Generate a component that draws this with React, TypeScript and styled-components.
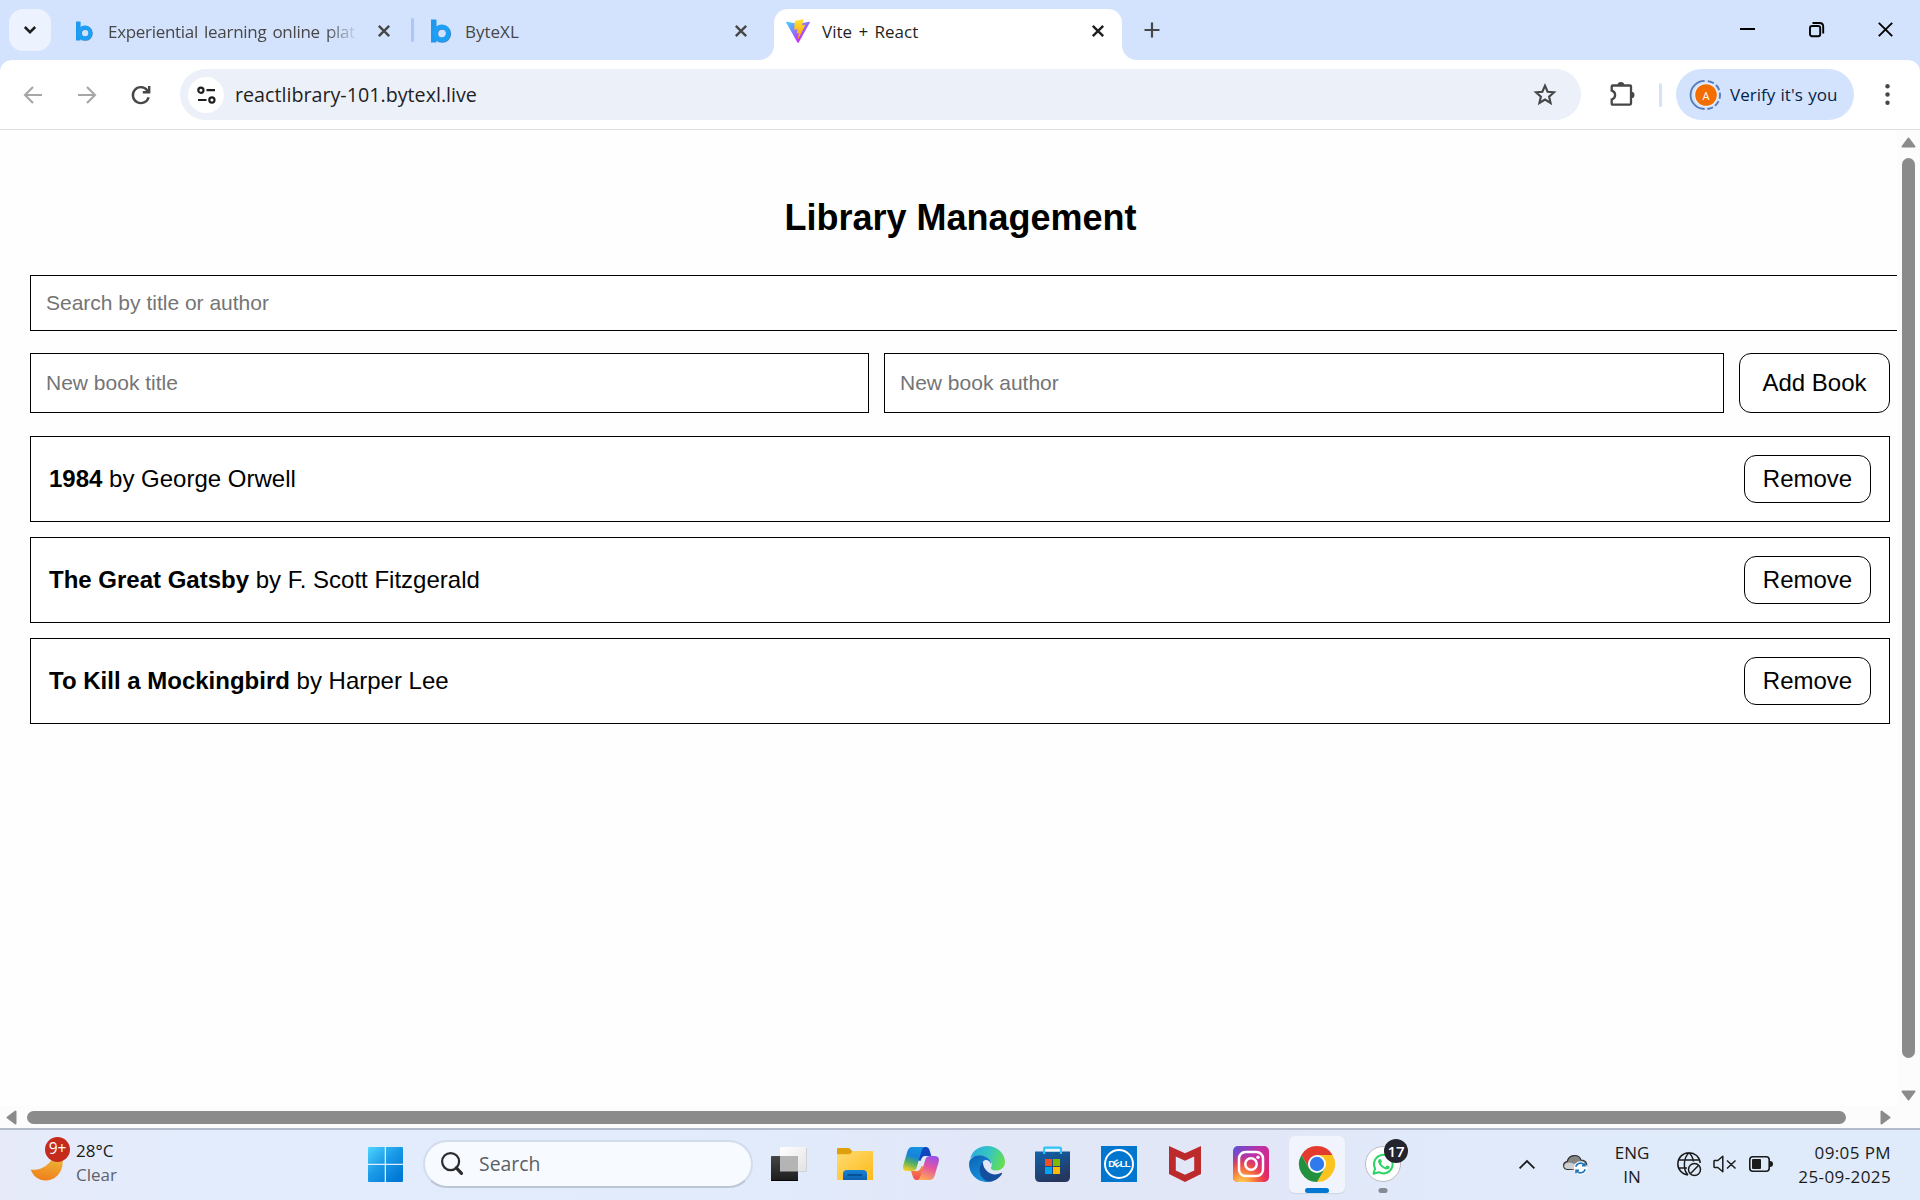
import React, { useState } from "react";
import styled, { createGlobalStyle, css } from "styled-components";

const Global = createGlobalStyle`
  *, *::before, *::after { box-sizing: border-box; }
  body { margin: 0; overflow: hidden; background: #fff; }
  button, input { font: inherit; margin: 0; }
  svg { display: block; flex: none; overflow: visible; }
`;

const uiFont = `"Open Sans", "Noto Sans", sans-serif`;
const pageFont = `"Liberation Sans", Arial, sans-serif`;

const Screen = styled.div`
  width: 1920px;
  height: 1200px;
  display: flex;
  flex-direction: column;
  background: #d3e3fd;
  overflow: hidden;
  font-family: ${uiFont};
`;

const bareButton = css`
  border: 0;
  padding: 0;
  background: none;
  display: flex;
  align-items: center;
  justify-content: center;
  flex: none;
`;

/* ---------- Tab strip ---------- */

const TabStrip = styled.header`
  display: flex;
  height: 60px;
  padding: 9px 0 0 9px;
  flex: none;
`;

const TabSearch = styled.button`
  ${bareButton}
  width: 42px;
  height: 42px;
  border-radius: 14px;
  background: #ecf2fe;
  margin-right: 9px;
`;

const Tab = styled.div<{ $width: number; $right: number; $active?: boolean }>`
  position: relative;
  display: flex;
  align-items: center;
  width: ${(p) => p.$width}px;
  height: 51px;
  padding: 0 ${(p) => p.$right}px 17px 12px;
  flex: none;
  color: ${(p) => (p.$active ? "#1f1f1f" : "#474747")};
  ${(p) =>
    p.$active &&
    css`
      background: #fff;
      border-radius: 14px 14px 0 0;
      &::before,
      &::after {
        content: "";
        position: absolute;
        bottom: 0;
        width: 15px;
        height: 15px;
      }
      &::before {
        left: -15px;
        background: radial-gradient(circle at 0 0, transparent 14.5px, #fff 15.5px);
      }
      &::after {
        right: -15px;
        background: radial-gradient(circle at 100% 0, transparent 14.5px, #fff 15.5px);
      }
    `}
`;

const Favicon = styled.span`
  display: flex;
  justify-content: center;
  align-items: center;
  width: 24px;
  height: 42px;
  flex: none;
  margin-top: 9px;
`;

const TabTitle = styled.span<{ $fade?: boolean }>`
  flex: 1;
  min-width: 0;
  margin: 11px 20px 0 12px;
  font-size: 17px;
  line-height: 24px;
  white-space: nowrap;
  word-spacing: 2px;
  ${(p) =>
    p.$fade &&
    css`
      letter-spacing: -0.3px;
      mask-image: linear-gradient(to right, #000 calc(100% - 32px), transparent);
    `}
`;

const TabClose = styled.button`
  ${bareButton}
  color: inherit;
  width: 12px;
  height: 12px;
  margin-top: 9px;
`;

const TabDivider = styled.span`
  width: 3px;
  height: 24px;
  border-radius: 2px;
  background: #a8c7fa;
  margin: 9px 3px 0 0;
  flex: none;
`;

const NewTab = styled.button`
  ${bareButton}
  width: 60px;
  height: 42px;
`;

const WindowControls = styled.div`
  margin-left: auto;
  display: flex;
  height: 42px;
  margin-top: -1px;
`;

const WindowButton = styled.button`
  ${bareButton}
  width: 69px;
`;

/* ---------- Toolbar ---------- */

const Toolbar = styled.nav`
  display: flex;
  align-items: center;
  height: 70px;
  flex: none;
  padding: 0 18px 0 15px;
  background: #fff;
  border-bottom: 1px solid #dedfe1;
  border-radius: 12px 12px 0 0;
`;

const ToolButton = styled.button<{ $after?: number }>`
  ${bareButton}
  width: 36px;
  height: 36px;
  margin-right: ${(p) => p.$after ?? 18}px;
`;

const AddressBar = styled.div`
  display: flex;
  align-items: center;
  width: 1401px;
  height: 51px;
  padding: 0 24px 0 8px;
  border-radius: 26px;
  background: #ecf0f9;
  margin-right: 23px;
  flex: none;
`;

const SiteInfo = styled.button`
  ${bareButton}
  width: 36px;
  height: 36px;
  border-radius: 50%;
  background: #fff;
`;

const Url = styled.span`
  flex: 1;
  margin-left: 11px;
  font-size: 19.7px;
  line-height: 26px;
  color: #1f1f1f;
`;

const ToolDivider = styled.span`
  flex: none;
  width: 3px;
  height: 24px;
  border-radius: 2px;
  background: #d3e3fd;
  margin-right: 14px;
`;

const ProfileChip = styled.button`
  ${bareButton}
  justify-content: flex-start;
  width: 178px;
  height: 51px;
  padding-left: 15px;
  border-radius: 26px;
  background: #d3e3fd;
  color: #041e49;
  font-size: 17px;
  line-height: 24px;
  gap: 9px;
  word-spacing: 1px;
  white-space: nowrap;
`;

const Avatar = styled.span`
  position: relative;
  display: flex;
  width: 30px;
  height: 30px;
  align-items: center;
  justify-content: center;
`;

const AvatarLetter = styled.span`
  position: absolute;
  inset: 0;
  text-align: center;
  font-size: 11px;
  line-height: 31px;
  color: #fff;
`;

const MenuButton = styled.button`
  ${bareButton}
  width: 30px;
  height: 36px;
  margin-left: 18px;
`;

/* ---------- Page viewport ---------- */

const Viewport = styled.div`
  display: grid;
  grid-template-columns: 1897px 23px;
  grid-template-rows: 976px 22px;
  height: 998px;
  flex: none;
  background: #fcfcfc;
`;

const Page = styled.main`
  padding: 60px 7px 0 30px;
  background: #fefefe;
  overflow: hidden;
  font-family: ${pageFont};
  font-size: 24px;
  color: #000;
`;

const Heading = styled.h1`
  margin: 5px 0 35px 1px;
  text-align: center;
  font-size: 36px;
  line-height: 45px;
  font-weight: 700;
`;

const Field = styled.input`
  border: 1px solid #000;
  border-radius: 0;
  padding: 0 15px;
  font-size: 21px;
  background: #fff;
  color: #000;
  outline: none;
  min-width: 0;
  &::placeholder {
    color: #757575;
    opacity: 1;
  }
`;

const SearchField = styled(Field)`
  display: block;
  width: 1892px;
  height: 56px;
  margin-bottom: 22px;
`;

const AddRow = styled.form`
  display: grid;
  grid-template-columns: 839px 840px 151px;
  gap: 15px;
  height: 60px;
  margin-bottom: 23px;
`;

const PageButton = styled.button<{ $w: number; $h: number }>`
  ${bareButton}
  width: ${(p) => p.$w}px;
  height: ${(p) => p.$h}px;
  border: 1px solid #000;
  border-radius: 12px;
  background: #fff;
  color: #000;
  font-size: 24px;
`;

const BookList = styled.ul`
  list-style: none;
  margin: 0;
  padding: 0;
  display: flex;
  flex-direction: column;
  gap: 15px;
`;

const BookRow = styled.li`
  display: flex;
  align-items: center;
  justify-content: space-between;
  height: 86px;
  padding: 0 18px;
  border: 1px solid #000;
  background: #fff;
`;

/* ---------- Scrollbars ---------- */

const VTrack = styled.div`
  display: flex;
  flex-direction: column;
  align-items: center;
  padding: 7px 0 5px 0;
  background: #fcfcfc;
`;

const VThumb = styled.div`
  width: 13px;
  height: 900px;
  margin: 10px 0 auto 0;
  border-radius: 7px;
  background: #8b8b8b;
`;

const HTrack = styled.div`
  display: flex;
  align-items: center;
  padding: 1px 6px 0 6px;
  background: #fcfcfc;
`;

const HThumb = styled.div`
  width: 1819px;
  height: 13px;
  margin: 0 auto 0 10px;
  border-radius: 7px;
  background: #8b8b8b;
`;

/* ---------- Taskbar ---------- */

const Taskbar = styled.footer`
  display: flex;
  align-items: flex-start;
  height: 72px;
  flex: none;
  border-top: 2px solid #b3bbca;
  background: linear-gradient(90deg, #e6eaf9 0, #e3ecfc 180px, #e1ebfb 760px, #e2e7f8 1000px, #e2e7f8 1250px, #e0eafa 1450px, #dfebfa 1920px);
  color: #1b1b1b;
`;

const Weather = styled.div`
  display: flex;
  width: 352px;
  padding: 7px 0 0 30px;
  gap: 10px;
`;

const MoonBox = styled.span`
  position: relative;
  width: 36px;
  height: 46px;
  padding-top: 21px;
  flex: none;
`;

const AlertBadge = styled.span`
  position: absolute;
  left: 15px;
  top: 0;
  width: 25px;
  height: 25px;
  border-radius: 50%;
  background: #c42b1c;
  color: #fff;
  font-size: 15.5px;
  line-height: 23px;
  text-align: center;
`;

const TwoLines = styled.div<{ $align?: string; $w?: number; $track?: number }>`
  display: flex;
  flex-direction: column;
  margin-top: 2px;
  font-size: 17px;
  line-height: 24px;
  letter-spacing: ${(p) => p.$track ?? 0}px;
  text-align: ${(p) => p.$align ?? "left"};
  ${(p) => p.$w && `width: ${p.$w}px;`}
  flex: none;
`;

const WeatherState = styled.span`
  color: #5d6169;
`;

const StartButton = styled.button`
  ${bareButton}
  width: 66px;
  height: 69px;
`;

const TaskSearch = styled.div`
  display: flex;
  align-items: center;
  width: 330px;
  height: 48px;
  margin: 10px 3px 0 5px;
  padding: 0 0 1px 16px;
  gap: 16px;
  border: 2px solid #d3dcec;
  border-bottom-color: #bcc5d5;
  border-radius: 24px;
  background: #f7faff;
  color: #5c5f64;
  font-size: 19.4px;
  flex: none;
`;

const TaskApps = styled.div`
  display: flex;
  height: 70px;
`;

const TaskApp = styled.button<{ $active?: boolean }>`
  ${bareButton}
  position: relative;
  width: 56px;
  height: 57px;
  margin: 6px 5px 0;
  border-radius: 6px;
  padding-bottom: 1px;
  ${(p) =>
    p.$active &&
    css`
      background: #f1f4fd;
      box-shadow: 0 1px 1px #cdd3e2, 0 0 0 1px #e3e8f5;
    `}
`;

const Indicator = styled.span<{ $active?: boolean }>`
  position: absolute;
  bottom: 0;
  left: 50%;
  transform: translateX(-50%);
  width: ${(p) => (p.$active ? 24 : 9)}px;
  height: 5px;
  border-radius: 3px;
  background: ${(p) => (p.$active ? "#0078d4" : "#868a95")};
`;

const CountBadge = styled.span`
  position: absolute;
  left: 29px;
  top: 3px;
  width: 24px;
  height: 24px;
  border-radius: 50%;
  background: #23242d;
  color: #fff;
  font: 600 15px/24px ${uiFont};
  text-align: center;
`;

const Tray = styled.div`
  display: flex;
  align-items: center;
  margin-left: auto;
  height: 68px;
  padding-right: 29px;
`;

const TrayIcon = styled.span<{ $ml: number }>`
  display: flex;
  margin-left: ${(p) => p.$ml}px;
`;

/* ---------- Drawings ---------- */

const Close = ({ size = 12, w = 2.4 }: { size?: number; w?: number }) => (
  <svg width={size} height={size} viewBox={`0 0 ${size} ${size}`} stroke="currentColor" strokeWidth={w} fill="none">
    <path d={`M.8 .8L${size - 0.8} ${size - 0.8}M${size - 0.8} .8L.8 ${size - 0.8}`} />
  </svg>
);

const ByteLogo = ({ size }: { size: number }) => (
  <svg width={(size * 20) / 24} height={size} viewBox="0 0 20 24">
    <circle cx="11.2" cy="14.8" r="6.5" fill="none" stroke="#4d80b3" strokeWidth="5" />
    <path d="M0 .5H4.500Q5.500 .5 5.500 1.500V23.500H0Z" fill="#1f98ee" />
    <circle cx="10.7" cy="14.3" r="6.5" fill="none" stroke="#1c9ff6" strokeWidth="4.8" />
  </svg>
);

const ViteLogo = () => (
  <svg width="24" height="24" viewBox="0 0 256 257">
    <defs>
      <linearGradient id="vg1" x1="-.8%" x2="57.6%" y1="7.7%" y2="78.4%">
        <stop offset="0" stopColor="#41D1FF" />
        <stop offset="1" stopColor="#BD34FE" />
      </linearGradient>
      <linearGradient id="vg2" x1="43.4%" x2="50.3%" y1="2.2%" y2="89%">
        <stop offset="0" stopColor="#FFEA83" />
        <stop offset=".083" stopColor="#FFDD35" />
        <stop offset="1" stopColor="#FFA800" />
      </linearGradient>
    </defs>
    <path fill="url(#vg1)" d="M255.153 37.938L134.897 252.976c-2.483 4.44-8.862 4.466-11.382.048L.875 37.958c-2.746-4.814 1.371-10.646 6.827-9.67l120.385 21.517a6.537 6.537 0 0 0 2.322-.004l117.867-21.483c5.438-.991 9.574 4.796 6.877 9.62Z" />
    <path fill="url(#vg2)" d="M185.432.063L96.44 17.501a3.268 3.268 0 0 0-2.634 3.014l-5.474 92.456a3.268 3.268 0 0 0 3.997 3.378l24.777-5.718c2.318-.535 4.413 1.507 3.936 3.838l-7.361 36.047c-.495 2.426 1.782 4.5 4.151 3.78l15.304-4.649c2.372-.72 4.652 1.36 4.15 3.788l-11.698 56.621c-.732 3.542 3.979 5.473 5.943 2.437l1.313-2.028l72.516-144.72c1.215-2.423-.88-5.186-3.54-4.672l-25.505 4.922c-2.396.462-4.435-1.77-3.759-4.114l16.646-57.705c.677-2.35-1.37-4.583-3.769-4.113Z" />
  </svg>
);

const Arrow = ({ flip }: { flip?: boolean }) => (
  <svg width="18" height="18" viewBox="0 0 18 18" fill="none" stroke="#a6a6a6" strokeWidth="2.1">
    <path d={flip ? "M0 9H16.5M9 .9L17 9L9 17.1" : "M18 9H1.5M9 .9L1 9L9 17.1"} />
  </svg>
);

const Reload = () => (
  <svg width="20" height="20" viewBox="0 0 20 20" fill="none" stroke="#474747" strokeWidth="2.4">
    <path d="M17.6 12.2A8 8 0 1 1 16.2 5.2L18 7" />
    <path d="M18.2 1V7.2H11.8" />
  </svg>
);

const Tune = () => (
  <svg width="19" height="18" viewBox="0 0 19 18" fill="none" stroke="#1f1f1f" strokeWidth="2.2">
    <circle cx="3.9" cy="4.2" r="2.6" />
    <path d="M9.5 4.2H18M1 14H9.5" />
    <circle cx="14.9" cy="14" r="2.6" />
  </svg>
);

const Star = () => (
  <svg width="24" height="24" viewBox="0 .7 24 24" fill="none" stroke="#474747" strokeWidth="2.1">
    <path d="M12 3.3L14.6 9.4L21 10L16.1 14.3L17.6 20.7L12 17.3L6.4 20.7L7.9 14.3L3 10L9.4 9.4Z" />
  </svg>
);

const Puzzle = () => (
  <svg width="24" height="25" viewBox="0 .7 24 25">
    <path d="M1.7 5.2Q1.7 4.2 2.7 4.2H20Q21 4.2 21 5.2V22.3Q21 23.3 20 23.3H2.7Q1.7 23.3 1.7 22.3V18.2A4.6 4.6 0 0 0 1.7 9.3Z" fill="none" stroke="#474747" strokeWidth="2.3" />
    <path d="M7.6 4A3.3 3.3 0 0 1 14.2 4ZM21.2 10.4A3.3 3.3 0 0 1 21.2 17Z" fill="#474747" />
  </svg>
);

const AvatarDisc = () => (
  <svg width="30" height="30" viewBox="0 0 30 30">
    <circle cx="15" cy="15" r="12" fill="#e9effb" />
    <circle cx="15" cy="15" r="10.8" fill="#f46d00" />
    <g fill="none" stroke="#5279b4" strokeWidth="1.8">
      <path d="M13.6 .9A14 14 0 0 0 13.6 29" />
      <path d="M16.8 1.1A14 14 0 0 1 22.8 3.3M25 5A14 14 0 0 1 28.2 10.1M28.9 12.7A14 14 0 0 1 28.5 18.7M27.6 21.2A14 14 0 0 1 24 25.8M22 27.2A14 14 0 0 1 16.4 29" />
    </g>
  </svg>
);

const Triangle = ({ d, w, h }: { d: string; w: number; h: number }) => (
  <svg width={w} height={h} viewBox={`0 0 ${w} ${h}`}>
    <path d={d} fill="#8b8b8b" stroke="#8b8b8b" strokeWidth="2" strokeLinejoin="round" />
  </svg>
);

const Moon = () => (
  <svg width="34" height="24" viewBox="0 0 34 24">
    <defs>
      <linearGradient id="moon" x1=".6" y1="0" x2=".4" y2="1">
        <stop offset="0" stopColor="#ecb73a" />
        <stop offset="1" stopColor="#ef7f1a" />
      </linearGradient>
    </defs>
    <path d="M.8 11.5C11 13 19 7.500 24 -2L32 -1C35 10 28 22 16.500 22.500C9 22.800 3 18.500 .8 11.500Z" fill="url(#moon)" />
  </svg>
);

const WindowsLogo = () => (
  <svg width="35" height="35" viewBox="0 0 35 35">
    <defs>
      <linearGradient id="win" gradientUnits="userSpaceOnUse" x1="0" y1="0" x2="30" y2="32">
        <stop offset="0" stopColor="#50d4ff" />
        <stop offset=".5" stopColor="#1b9be8" />
        <stop offset="1" stopColor="#0078d4" />
      </linearGradient>
    </defs>
    <path d="M1 0H16.700V16.700H0V1Q0 0 1 0ZM18 0H34Q35 0 35 1V16.700H18ZM0 18H16.700V35H1Q0 35 0 34ZM18 18H35V34Q35 35 34 35H18Z" fill="url(#win)" />
  </svg>
);

const Magnifier = () => (
  <svg width="22" height="23" viewBox="0 0 22 23" fill="none" stroke="#2b2b2b">
    <circle cx="9.600" cy="9.600" r="8.500" strokeWidth="2.200" />
    <path d="M15.300 15.800L20.500 21.300" strokeWidth="3.200" strokeLinecap="round" />
  </svg>
);

const TaskView = () => (
  <svg width="36" height="36" viewBox="0 0 36 36">
    <defs>
      <linearGradient id="tvd" x2="0" y2="1">
        <stop offset="0" stopColor="#454545" />
        <stop offset="1" stopColor="#1c1c1c" />
      </linearGradient>
      <linearGradient id="tvl" x2="1" y2="1">
        <stop offset="0" stopColor="#fff" />
        <stop offset="1" stopColor="#e2e2e2" />
      </linearGradient>
    </defs>
    <rect x="9" y="1" width="27" height="25" rx="1" fill="url(#tvl)" />
    <path d="M9.500 25.500H35.500V2" fill="none" stroke="#cfd1d6" />
    <rect x="0" y="10" width="27" height="25" rx="1" fill="url(#tvd)" />
    <path d="M0 34.500H27" stroke="#050505" />
    <rect x="9" y="10" width="18" height="15.500" fill="#b4b4b4" />
  </svg>
);

const Folder = () => (
  <svg width="36" height="36" viewBox="0 0 36 36">
    <defs>
      <linearGradient id="fo" x2="1" y2="1">
        <stop offset="0" stopColor="#ffdb73" />
        <stop offset="1" stopColor="#fdbb17" />
      </linearGradient>
      <linearGradient id="fb" x2="0" y2="1">
        <stop offset="0" stopColor="#1683d6" />
        <stop offset="1" stopColor="#0c62b0" />
      </linearGradient>
    </defs>
    <path d="M0 3Q0 2 1 2H11Q12.500 2 13.300 3L15.500 5.500V12H0Z" fill="#dfa00b" />
    <path d="M0 8.200H11.500Q13 8.200 14 7.200L15.800 5H35Q36 5 36 6V34H0Z" fill="url(#fo)" />
    <path d="M6 34V28Q6 24 10 24H26Q30 24 30 28V34Z" fill="url(#fb)" />
    <path d="M10.500 29H25" stroke="#084f94" strokeWidth="1.800" />
  </svg>
);

const Copilot = () => (
  <svg width="36" height="36" viewBox="0 0 36 36">
    <defs>
      <linearGradient id="ca" x1=".6" y1="0" x2=".3" y2="1">
        <stop offset="0" stopColor="#1594e0" />
        <stop offset=".38" stopColor="#1583dc" />
        <stop offset=".66" stopColor="#4fae63" />
        <stop offset="1" stopColor="#f2ce25" />
      </linearGradient>
      <linearGradient id="cb" x1=".6" y1="0" x2=".3" y2="1">
        <stop offset="0" stopColor="#9c52e6" />
        <stop offset=".45" stopColor="#e5559f" />
        <stop offset="1" stopColor="#fda955" />
      </linearGradient>
      <linearGradient id="cc" x2="1" y2="1">
        <stop offset="0" stopColor="#0b49c4" />
        <stop offset="1" stopColor="#1840bd" />
      </linearGradient>
      <linearGradient id="cd" x2="0" y2="1">
        <stop offset="0" stopColor="#f7903c" />
        <stop offset="1" stopColor="#ef4c58" />
      </linearGradient>
    </defs>
    <path d="M18 1H23Q25.500 1 26.500 4L28.300 10H22Q19 10 17.500 15L14 14Z" fill="url(#cc)" />
    <path d="M18 34H13.500Q11 34 10 31L8 25H14Q17 25 18.500 20L22 21Z" fill="url(#cd)" />
    <path d="M9 1H22Q19.500 1.500 18.500 5L13.500 22Q12.500 25 9 25H4Q-1 25 .3 19L4.500 5Q6 1 9 1Z" fill="url(#ca)" />
    <path d="M27 34H14Q16.500 33.500 17.500 30L22.500 13Q23.500 10 27 10H32Q37 10 35.700 16L31.500 30Q30 34 27 34Z" fill="url(#cb)" />
  </svg>
);

const Edge = () => (
  <svg width="36" height="36" viewBox="0 0 36 36">
    <defs>
      <linearGradient id="ea" x1="0" x2="1" y1=".3" y2=".6">
        <stop offset="0" stopColor="#2aaede" />
        <stop offset=".5" stopColor="#35c6c0" />
        <stop offset="1" stopColor="#66df4d" />
      </linearGradient>
      <linearGradient id="eb" x2=".5" y2="1">
        <stop offset="0" stopColor="#0c62b4" />
        <stop offset="1" stopColor="#1790dc" />
      </linearGradient>
    </defs>
    <path d="M1 13C3 5 10 0 18 0C28 0 36 7 36 16C36 21 32 24.500 27 24.500C24 24.500 21.500 23.500 22 21.500C24 19 22 13 17 11C11 8.500 4 9.500 1 13Z" fill="url(#ea)" />
    <path d="M.3 15.500C3 9.500 10 8 15.500 10.300C20 12 22.500 15 22 18C21 14.500 17 12.500 14.500 15C11 20 13.500 30 21 34C22 34.800 21.500 35.500 19 36C8 36.500 -1.500 27 .3 15.500Z" fill="url(#eb)" />
    <path d="M13.800 16C7 23 12 35 21 35.800C26 35 31 31.500 33 27.700C33.300 26.700 32.700 26.600 32 27C24 31 14.500 26 13.800 16Z" fill="#134f9c" />
  </svg>
);

const Store = () => (
  <svg width="36" height="36" viewBox="0 0 36 36">
    <defs>
      <linearGradient id="st" x2=".4" y2="1">
        <stop offset="0" stopColor="#1064ae" />
        <stop offset="1" stopColor="#25375f" />
      </linearGradient>
    </defs>
    <path d="M0 5.500H35V31Q35 36 30 36H5Q0 36 0 31Z" fill="url(#st)" />
    <path d="M9.200 8V2.500Q9.200 1.600 10.100 1.600H25Q25.900 1.600 25.900 2.500V8" fill="none" stroke="#2fc4f2" strokeWidth="2.200" />
    <path d="M10.300 3.500H24.800V5.500H10.300Z" fill="#f3f8fd" />
    <path d="M10 13H17V20H10Z" fill="#f25022" />
    <path d="M18 13H25V20H18Z" fill="#7fba00" />
    <path d="M10 21H17V28H10Z" fill="#00a4ef" />
    <path d="M18 21H25V28H18Z" fill="#ffb900" />
  </svg>
);

const DellTile = styled.span`
  display: flex;
  align-items: center;
  justify-content: center;
  width: 36px;
  height: 36px;
  background: #0076ce;
`;

const DellRing = styled.span`
  display: flex;
  align-items: center;
  justify-content: center;
  width: 30px;
  height: 30px;
  border: 2px solid #fff;
  border-radius: 50%;
  color: #fff;
  font: 700 9.500px/10px ${pageFont};
  letter-spacing: -0.800px;
`;

const DellTilt = styled.span`
  display: inline-block;
  transform: rotate(-35deg);
`;

const McAfee = () => (
  <svg width="36" height="36" viewBox="0 0 36 36">
    <path d="M2 0L18 7.300L34 0V28L18 36L2 28Z M8.800 10.500V24.500L18 28.700L27.200 24.500V10.500L18 14.800Z" fill="#bd2a2c" fillRule="evenodd" />
  </svg>
);

const Instagram = () => (
  <svg width="36" height="36" viewBox="0 0 36 36">
    <defs>
      <linearGradient id="ig" x1="0" y1="0" x2="1" y2=".8">
        <stop offset="0" stopColor="#5a53d8" />
        <stop offset=".5" stopColor="#c32fa4" />
        <stop offset="1" stopColor="#e0246c" />
      </linearGradient>
      <radialGradient id="ih" cx=".25" cy="1.050" r=".85">
        <stop offset="0" stopColor="#ffd95c" />
        <stop offset=".3" stopColor="#fd9a3c" />
        <stop offset=".65" stopColor="#f2503f" stopOpacity=".85" />
        <stop offset="1" stopColor="#e0246c" stopOpacity="0" />
      </radialGradient>
    </defs>
    <rect width="36" height="36" rx="5" fill="url(#ig)" />
    <rect width="36" height="36" rx="5" fill="url(#ih)" />
    <rect x="6" y="6" width="24" height="24" rx="6.500" fill="none" stroke="#fff" strokeWidth="2.500" />
    <circle cx="18" cy="18" r="5.700" fill="none" stroke="#fff" strokeWidth="2.500" />
    <circle cx="25" cy="11.200" r="1.700" fill="#fff" />
  </svg>
);

const Chrome = () => (
  <svg width="36" height="36" viewBox="0 0 36 36">
    <path d="M2.400 9A18 18 0 0 1 33.600 9H18L10.200 22.500Z" fill="#e33b2e" />
    <path d="M33.600 9A18 18 0 0 1 18 36L25.800 22.500L18 9Z" fill="#fcc31e" />
    <path d="M2.400 9A18 18 0 0 0 18 36L25.800 22.500H10.200Z" fill="#21913f" />
    <circle cx="18" cy="18" r="9" fill="#fff" />
    <circle cx="18" cy="18" r="7.200" fill="#2f7bed" />
  </svg>
);

const WhatsApp = () => (
  <svg width="36" height="36" viewBox="0 0 36 36">
    <circle cx="18" cy="18" r="17.500" fill="#fff" stroke="#b9bcc4" />
    <path d="M8.500 27.800L10.100 22.400A9.300 9.300 0 1 1 13.800 26.200Z" fill="none" stroke="#2bd366" strokeWidth="2" strokeLinejoin="round" />
    <path d="M14.200 13.200C15 12.700 15.600 12.800 16 13.600L16.800 15.500C16.900 16 16.400 16.500 15.900 17.100C16.900 19.200 18.400 20.400 20.300 21.200L21.600 19.700C22 19.300 22.300 19.400 22.700 19.600L24.600 20.600C25 21 24.500 23.300 22 23.500C17.800 23.500 12.800 18 13.100 15C13.200 14.200 13.600 13.600 14.200 13.200Z" fill="#2bd366" />
  </svg>
);

const Cloud = () => (
  <svg width="24" height="20" viewBox="0 0 24 20">
    <path d="M5 15.500C-.5 15.500-.8 8.200 4.200 7.500C6-.2 16-.2 18 6C24 6 25 12 22 14.500Z" fill="#858585" stroke="#2e2e2e" strokeWidth="1.200" />
    <path d="M1.200 12C1.700 8.500 6 7.500 9.500 9.200L16 12V15H5C3 15 1.200 14 1.200 12Z" fill="#d0d0d0" />
    <circle cx="17.500" cy="14" r="6.800" fill="#fff" />
    <g fill="none" stroke="#1a75bf" strokeWidth="1.600">
      <path d="M12.800 12.700A4.900 4.900 0 0 1 21.500 11.200M22.200 15.300A4.900 4.900 0 0 1 13.500 16.800" />
      <path d="M22 8.700V11.700H19M13 19.300V16.300H16" />
    </g>
  </svg>
);

const GlobeOff = () => (
  <svg width="24" height="24" viewBox="0 0 24 24" fill="none" stroke="#1b1b1b" strokeWidth="1.500">
    <path d="M11 23A11.200 11.200 0 1 1 23.200 11M1.500 8H22.500M1.500 16H10M11 23C6 18 6 6 12 .8C14.500 3 16 6 16.400 9.500" />
    <circle cx="17.500" cy="17.500" r="6" />
    <path d="M13.300 21.700L21.700 13.300" />
  </svg>
);

const Muted = () => (
  <svg width="24" height="18" viewBox="0 0 24 18" fill="none" stroke="#1b1b1b" strokeWidth="1.500" strokeLinejoin="round">
    <path d="M1 6.200Q1 5.500 1.700 5.500H4.800L9.800 1.200V16.800L4.800 12.500H1.700Q1 12.500 1 11.800ZM14 5.500L22.500 13.500M22.500 5.500L14 13.500" />
  </svg>
);

const Battery = () => (
  <svg width="24" height="16" viewBox="0 0 24 16">
    <rect x=".8" y=".8" width="19.400" height="14.400" rx="3" fill="none" stroke="#1b1b1b" strokeWidth="1.600" />
    <rect x="3" y="3" width="9" height="10" rx="1" fill="#1b1b1b" />
    <path d="M21 5Q24 5 24 8Q24 11 21 11Z" fill="#1b1b1b" />
  </svg>
);

/* ---------- App ---------- */

const initialBooks = [
  { title: "1984", author: "George Orwell" },
  { title: "The Great Gatsby", author: "F. Scott Fitzgerald" },
  { title: "To Kill a Mockingbird", author: "Harper Lee" },
];

function Library() {
  const [books, setBooks] = useState(initialBooks);
  const [query, setQuery] = useState("");
  const [title, setTitle] = useState("");
  const [author, setAuthor] = useState("");
  const q = query.toLowerCase();
  const shown = books.filter((b) => `${b.title}\n${b.author}`.toLowerCase().includes(q));

  const add = (e: React.FormEvent) => {
    e.preventDefault();
    if (!title || !author) return;
    setBooks([...books, { title, author }]);
    setTitle("");
    setAuthor("");
  };

  return (
    <Page>
      <Heading>Library Management</Heading>
      <SearchField placeholder="Search by title or author" value={query} onChange={(e) => setQuery(e.target.value)} />
      <AddRow onSubmit={add}>
        <Field placeholder="New book title" value={title} onChange={(e) => setTitle(e.target.value)} />
        <Field placeholder="New book author" value={author} onChange={(e) => setAuthor(e.target.value)} />
        <PageButton $w={151} $h={60}>Add Book</PageButton>
      </AddRow>
      <BookList>
        {shown.map((b) => (
          <BookRow key={b.title}>
            <span>
              <strong>{b.title}</strong> by {b.author}
            </span>
            <PageButton $w={127} $h={48} onClick={() => setBooks(books.filter((x) => x !== b))}>
              Remove
            </PageButton>
          </BookRow>
        ))}
      </BookList>
    </Page>
  );
}

export default function App() {
  return (
    <Screen>
      <Global />
      <TabStrip>
        <TabSearch>
          <svg width="12" height="8" viewBox="0 0 12 8" fill="none" stroke="#1f1f1f" strokeWidth="2.500">
            <path d="M.8 1L6 6.200L11.200 1" />
          </svg>
        </TabSearch>
        <Tab $width={351} $right={21}>
          <Favicon><ByteLogo size={20} /></Favicon>
          <TabTitle $fade>Experiential learning online plat</TabTitle>
          <TabClose><Close /></TabClose>
        </Tab>
        <TabDivider />
        <Tab $width={357} $right={27}>
          <Favicon><ByteLogo size={24} /></Favicon>
          <TabTitle>ByteXL</TabTitle>
          <TabClose><Close /></TabClose>
        </Tab>
        <Tab $width={348} $right={18} $active>
          <Favicon><ViteLogo /></Favicon>
          <TabTitle>Vite + React</TabTitle>
          <TabClose><Close /></TabClose>
        </Tab>
        <NewTab>
          <svg width="16" height="16" viewBox="0 0 16 16" stroke="#474747" strokeWidth="2.200">
            <path d="M8 .5V15.500M.5 8H15.500" />
          </svg>
        </NewTab>
        <WindowControls>
          <WindowButton>
            <svg width="15" height="15" viewBox="0 0 15 15"><path d="M0 7H15" stroke="#000" strokeWidth="2" /></svg>
          </WindowButton>
          <WindowButton>
            <svg width="15" height="15" viewBox="0 0 15 15" fill="none" stroke="#000" strokeWidth="1.900">
              <rect x="1" y="4" width="10.200" height="10.200" rx="2" />
              <path d="M3.500 1H10.500Q14.200 1 14.200 4.500V11.500" />
            </svg>
          </WindowButton>
          <WindowButton><Close size={15} w={1.9} /></WindowButton>
        </WindowControls>
      </TabStrip>

      <Toolbar>
        <ToolButton><Arrow /></ToolButton>
        <ToolButton><Arrow flip /></ToolButton>
        <ToolButton $after={21}><Reload /></ToolButton>
        <AddressBar>
          <SiteInfo><Tune /></SiteInfo>
          <Url>reactlibrary-101.bytexl.live</Url>
          <Star />
        </AddressBar>
        <ToolButton $after={19}><Puzzle /></ToolButton>
        <ToolDivider />
        <ProfileChip>
          <Avatar>
            <AvatarDisc />
            <AvatarLetter>A</AvatarLetter>
          </Avatar>
          Verify it's you
        </ProfileChip>
        <MenuButton>
          <svg width="5" height="21" viewBox="0 0 5 21" fill="#474747">
            <circle cx="2.500" cy="2.300" r="2.200" />
            <circle cx="2.500" cy="10.500" r="2.200" />
            <circle cx="2.500" cy="18.700" r="2.200" />
          </svg>
        </MenuButton>
      </Toolbar>

      <Viewport>
        <Library />
        <VTrack>
          <Triangle w={15} h={11} d="M7.500 1.500L13.500 9.500H1.500Z" />
          <VThumb />
          <Triangle w={15} h={11} d="M7.500 9.500L13.500 1.500H1.500Z" />
        </VTrack>
        <HTrack>
          <Triangle w={11} h={15} d="M1.500 7.500L9.500 1.500V13.500Z" />
          <HThumb />
          <Triangle w={11} h={15} d="M9.500 7.500L1.500 1.500V13.500Z" />
        </HTrack>
      </Viewport>

      <Taskbar>
        <Weather>
          <MoonBox>
            <Moon />
            <AlertBadge>9+</AlertBadge>
          </MoonBox>
          <TwoLines>
            <span>28°C</span>
            <WeatherState>Clear</WeatherState>
          </TwoLines>
        </Weather>
        <StartButton><WindowsLogo /></StartButton>
        <TaskSearch>
          <Magnifier />
          Search
        </TaskSearch>
        <TaskApps>
          <TaskApp><TaskView /></TaskApp>
          <TaskApp><Folder /></TaskApp>
          <TaskApp><Copilot /></TaskApp>
          <TaskApp><Edge /></TaskApp>
          <TaskApp><Store /></TaskApp>
          <TaskApp>
            <DellTile>
              <DellRing>D<DellTilt>E</DellTilt>LL</DellRing>
            </DellTile>
          </TaskApp>
          <TaskApp><McAfee /></TaskApp>
          <TaskApp><Instagram /></TaskApp>
          <TaskApp $active>
            <Chrome />
            <Indicator $active />
          </TaskApp>
          <TaskApp>
            <WhatsApp />
            <CountBadge>17</CountBadge>
            <Indicator />
          </TaskApp>
        </TaskApps>
        <Tray>
          <TrayIcon $ml={0}>
            <svg width="16" height="9" viewBox="0 0 16 9" fill="none" stroke="#1b1b1b" strokeWidth="1.800"><path d="M.6 8.400L8 1L15.400 8.400" /></svg>
          </TrayIcon>
          <TrayIcon $ml={28}><Cloud /></TrayIcon>
          <TrayIcon $ml={20}><TwoLines $align="center" $w={50}><span>ENG</span><span>IN</span></TwoLines></TrayIcon>
          <TrayIcon $ml={20}><GlobeOff /></TrayIcon>
          <TrayIcon $ml={12}><Muted /></TrayIcon>
          <TrayIcon $ml={12}><Battery /></TrayIcon>
          <TrayIcon $ml={18}><TwoLines $align="right" $w={100} $track={0.4}><span>09:05 PM</span><span>25-09-2025</span></TwoLines></TrayIcon>
        </Tray>
      </Taskbar>
    </Screen>
  );
}
